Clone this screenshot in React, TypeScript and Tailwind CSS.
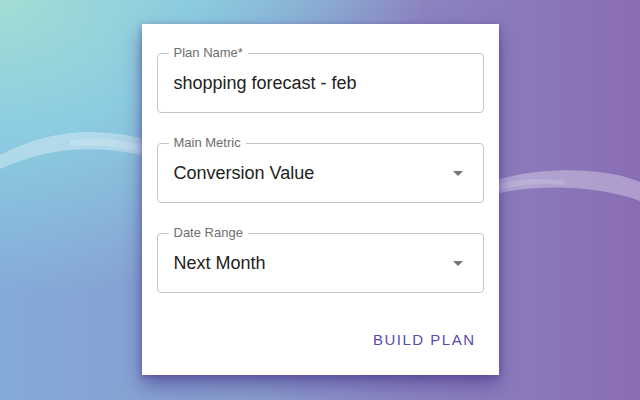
import React from "react";

function Field({ label, value, select }: { label: string; value: string; select?: boolean }) {
  return (
    <div className="relative h-[60px] rounded-[4px] border border-[#c4c4c4] flex items-center pl-[16px]">
      <span className="absolute -top-[9px] left-[11px] px-[5px] bg-white text-[13px] leading-[16px] text-[#6e6e6e]">
        {label}
      </span>
      <span className="text-[18px] text-[#222222] leading-[24px]">{value}</span>
      {select && (
        <svg
          className="absolute right-[13px] top-1/2 -translate-y-1/2"
          width="24"
          height="24"
          viewBox="0 0 24 24"
        >
          <path d="M7 10l5 5 5-5z" fill="#757575" />
        </svg>
      )}
    </div>
  );
}

export default function App() {
  return (
    <div
      className="relative w-[640px] h-[400px] overflow-hidden bg-[radial-gradient(ellipse_85%_95%_at_0%_0%,#a3ddd4_0%,rgba(141,208,226,0.9)_35%,rgba(141,208,226,0)_78%),linear-gradient(90deg,#84aad8_0%,#889ccc_40%,#8c84c0_65%,#8a6db4_100%)]"
      style={{ fontFamily: "'Liberation Sans', Arial, sans-serif" }}
    >
      <svg className="absolute inset-0" width="640" height="400" viewBox="0 0 640 400">
        <path
          d="M0 155 C60 124 120 124 200 158 S420 198 500 179 C540 168 600 166 640 182 L640 201 C600 186 540 184 500 193 S260 192 200 173 C120 142 60 142 0 169 Z"
          fill="rgba(255,255,255,0.32)"
        />
        <path
          d="M70 140 C100 136 125 140 150 147 L150 154 C125 147 100 144 70 146 Z"
          fill="rgba(255,255,255,0.18)"
        />
        <path
          d="M495 185 C520 178 540 178 565 181 L565 185 C540 183 520 184 495 192 Z"
          fill="rgba(255,255,255,0.14)"
        />
      </svg>
      <div className="relative mx-auto mt-[24px] w-[357px] h-[351px] bg-white shadow-[0_10px_18px_rgba(70,50,140,0.55),0_2px_6px_rgba(70,50,140,0.45)] flex flex-col px-[15px] pt-[29px]">
        <div className="flex flex-col gap-[30px]">
          <Field label="Plan Name*" value="shopping forecast - feb" />
          <Field label="Main Metric" value="Conversion Value" select />
          <Field label="Date Range" value="Next Month" select />
        </div>
        <div className="flex justify-end mt-[29px]">
          <button className="h-[36px] px-[8px] text-[15px] tracking-[0.1em] text-[#5b4bac] uppercase">
            Build Plan
          </button>
        </div>
      </div>
    </div>
  );
}
